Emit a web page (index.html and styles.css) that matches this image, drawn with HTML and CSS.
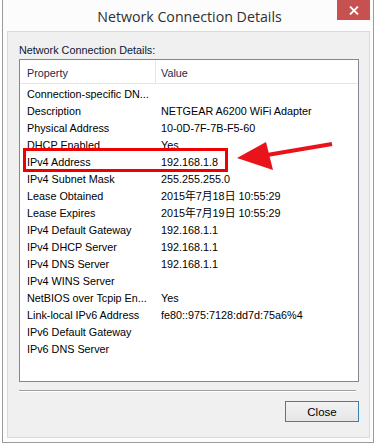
FILE: index.html
```html
<!DOCTYPE html>
<html lang="en">
<head>
    <meta charset="UTF-8">
    <title>Network Connection Details</title>
    <link rel="stylesheet" href="styles.css">
</head>
<body>
    <div class="window">
        <div class="titlebar">
            <span class="title">Network Connection Details</span>
            <button class="close-x">
                <svg width="10" height="9" viewBox="0 0 10 9"><path d="M1 0.5 L9 8.5 M9 0.5 L1 8.5" stroke="#fff" stroke-width="1.8"/></svg>
            </button>
        </div>

        <div class="panel">
            <div class="label">Network Connection Details:</div>

            <div class="listbox">
                <div class="header">
                    <div class="col-prop">Property</div>
                    <div class="col-val">Value</div>
                </div>
                <div class="rows">
                    <div class="row"><span class="col-prop">Connection-specific DN...</span><span class="col-val"></span></div>
                    <div class="row"><span class="col-prop">Description</span><span class="col-val">NETGEAR A6200 WiFi Adapter</span></div>
                    <div class="row"><span class="col-prop">Physical Address</span><span class="col-val">10-0D-7F-7B-F5-60</span></div>
                    <div class="row"><span class="col-prop">DHCP Enabled</span><span class="col-val">Yes</span></div>
                    <div class="row"><span class="col-prop">IPv4 Address</span><span class="col-val">192.168.1.8</span></div>
                    <div class="row"><span class="col-prop">IPv4 Subnet Mask</span><span class="col-val">255.255.255.0</span></div>
                    <div class="row"><span class="col-prop">Lease Obtained</span><span class="col-val">2015年7月18日 10:55:29</span></div>
                    <div class="row"><span class="col-prop">Lease Expires</span><span class="col-val">2015年7月19日 10:55:29</span></div>
                    <div class="row"><span class="col-prop">IPv4 Default Gateway</span><span class="col-val">192.168.1.1</span></div>
                    <div class="row"><span class="col-prop">IPv4 DHCP Server</span><span class="col-val">192.168.1.1</span></div>
                    <div class="row"><span class="col-prop">IPv4 DNS Server</span><span class="col-val">192.168.1.1</span></div>
                    <div class="row"><span class="col-prop">IPv4 WINS Server</span><span class="col-val"></span></div>
                    <div class="row"><span class="col-prop">NetBIOS over Tcpip En...</span><span class="col-val">Yes</span></div>
                    <div class="row"><span class="col-prop">Link-local IPv6 Address</span><span class="col-val">fe80::975:7128:dd7d:75a6%4</span></div>
                    <div class="row"><span class="col-prop">IPv6 Default Gateway</span><span class="col-val"></span></div>
                    <div class="row"><span class="col-prop">IPv6 DNS Server</span><span class="col-val"></span></div>
                </div>

                <!-- annotation drawn over the list -->
                <div class="highlight"></div>
                <svg class="arrow" width="100" height="34" viewBox="0 0 100 34">
                    <path d="M95 4 L30 15" stroke="#e8131b" stroke-width="4" fill="none"/>
                    <path d="M0 18 L29 2 L36 30 Z" fill="#e8131b"/>
                </svg>
            </div>

            <div class="separator"></div>

            <div class="footer">
                <button class="close-btn">Close</button>
            </div>
        </div>
    </div>
</body>
</html>
```

FILE: styles.css
```css
* {
    margin: 0;
    padding: 0;
    box-sizing: border-box;
}
body {
    background: #fff;
    font-family: "Liberation Sans", Arial, "Noto Sans CJK SC", sans-serif;
    font-size: 10.8px;
    color: #000;
}

.window {
    margin: 0 2px;
    width: 372px;
    height: 443px;
    border: 1px solid #9b9b9b;
    border-top: none;
    background: #fcfcfc;
    display: flex;
    flex-direction: column;
}

.titlebar {
    height: 31px;
    position: relative;
    display: flex;
    justify-content: center;
    align-items: center;
}
.title {
    font-family: "Open Sans", "Liberation Sans", sans-serif;
    font-size: 14.2px;
    color: #303030;
    margin-left: 3px;
    margin-top: 1px;
}
.close-x {
    position: absolute;
    top: 0;
    right: 3px;
    width: 33px;
    height: 20px;
    border: none;
    background: #c75050;
    display: flex;
    justify-content: center;
    align-items: center;
}

.panel {
    flex: 1;
    margin: 0 3px 4px 4px;
    border: 1px solid #dadada;
    background: #f0f0f0;
    padding: 11px 10px 0 11px;
    display: flex;
    flex-direction: column;
}

.label {
    color: #0b1634;
    height: 16px;
    line-height: 14px;
}

.listbox {
    position: relative;
    width: 340px;
    height: 323px;
    border: 1px solid #828790;
    background: #fff;
}

.header {
    display: flex;
    height: 24px;
    border-bottom: 1px solid #e5e5e5;
    color: #1c2a48;
    line-height: 23px;
    padding-top: 2px;
}
.header .col-prop {
    border-right: 1px solid #e5e5e5;
    margin-top: -2px;
    padding-top: 2px;
}

.col-prop {
    width: 136px;
    padding-left: 7px;
    white-space: nowrap;
}
.col-val {
    padding-left: 5px;
    white-space: nowrap;
}

.rows {
    padding-top: 2px;
}
.row {
    display: flex;
    height: 17px;
    line-height: 17px;
}

.highlight {
    position: absolute;
    left: 3px;
    top: 88px;
    width: 205px;
    height: 24px;
    border: 3px solid #ee0000;
}
.arrow {
    position: absolute;
    left: 217px;
    top: 80px;
}

.separator {
    margin-top: 8px;
    width: 337px;
    height: 2px;
    border-top: 1px solid #a0a0a0;
    border-bottom: 1px solid #fff;
}

.footer {
    display: flex;
    justify-content: flex-end;
    padding-top: 9px;
}
.close-btn {
    width: 74px;
    height: 21px;
    border: 1px solid #3c7fb1;
    background: linear-gradient(#f2f2f2, #e6e6e6);
    font-family: "Liberation Sans", Arial, sans-serif;
    font-size: 11.5px;
    color: #000;
}
```
